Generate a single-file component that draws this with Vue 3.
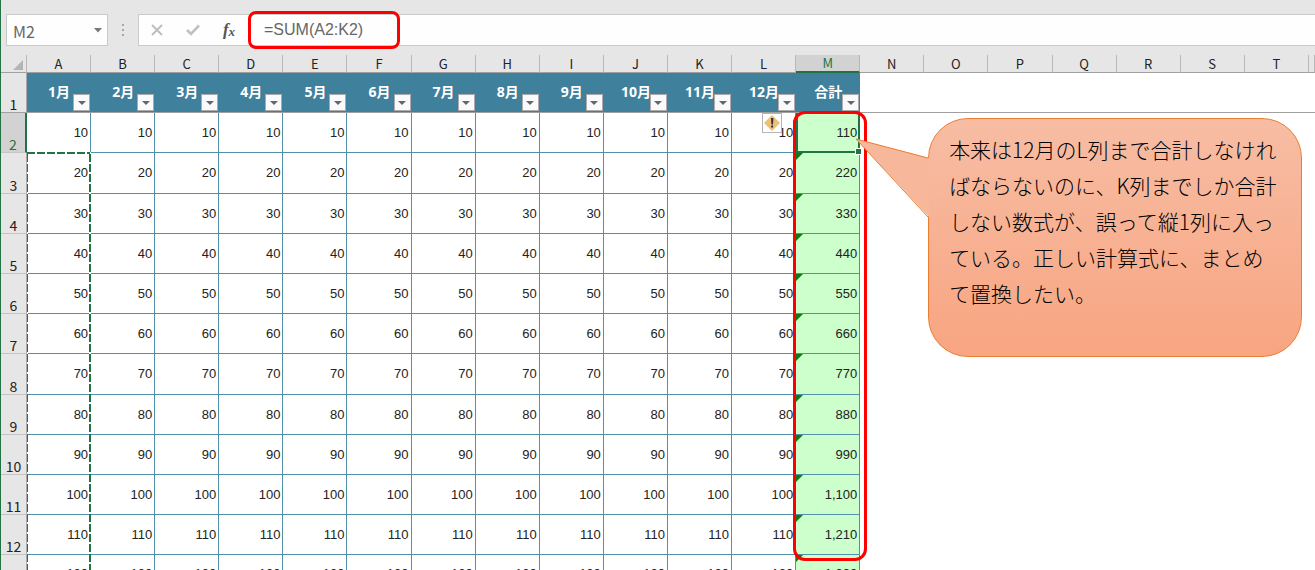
<script setup>
const letters = 'ABCDEFGHIJKLMNOPQRST'.split('')
const headers = [...Array.from({ length: 12 }, (_, i) => `${i + 1}月`), '合計']
const rows = Array.from({ length: 12 }, (_, i) => {
  const value = (i + 1) * 10
  return { number: i + 2, value, total: (value * 11).toLocaleString('en-US') }
})
const callout =
  '本来は12月のL列まで合計しなければならないのに、K列までしか合計しない数式が、誤って縦1列に入っている。正しい計算式に、まとめて置換したい。'
</script>

<template>
  <main class="app">
    <header class="bar">
      <div class="name-box">
        <input class="name-input" type="text" value="M2" aria-label="名前ボックス" />
        <button class="name-drop" type="button" aria-label="名前の一覧">
          <svg width="8" height="5" viewBox="0 0 8 5"><path d="M0 0h8L4 4.5z" fill="#777" /></svg>
        </button>
      </div>
      <svg class="grip" width="3" height="12" viewBox="0 0 3 12">
        <path d="M0 0h2v2H0zM0 5h2v2H0zM0 10h2v2H0z" fill="#a8a8a8" />
      </svg>
      <div class="formula-box">
        <button class="tool" type="button" aria-label="キャンセル">
          <svg width="12" height="12" viewBox="0 0 12 12"><path d="M1 1l10 10M11 1L1 11" fill="none" stroke="#bcbcbc" stroke-width="1.8" /></svg>
        </button>
        <button class="tool" type="button" aria-label="入力">
          <svg width="14" height="12" viewBox="0 0 14 12"><path d="M1 6L5 10L13 1.5" fill="none" stroke="#c0c0c0" stroke-width="2.6" /></svg>
        </button>
        <button class="tool fx" type="button" aria-label="関数の挿入"><i>f</i><i class="x">x</i></button>
        <input class="formula" type="text" value="=SUM(A2:K2)" aria-label="数式バー" />
      </div>
    </header>

    <table class="sheet">
      <colgroup>
        <col class="col-number" />
        <col v-for="l in letters" :key="l" />
        <col class="col-rest" />
      </colgroup>
      <thead>
        <tr class="letters">
          <th class="corner"><svg width="10" height="10" viewBox="0 0 10 10"><path d="M10 0v10H0z" fill="#b4b4b4" /></svg></th>
          <th v-for="l in letters" :key="l" scope="col" :class="{ active: l === 'M' }">{{ l }}</th>
          <th></th>
        </tr>
      </thead>
      <tbody>
        <tr class="titles">
          <th class="number" scope="row">1</th>
          <td v-for="h in headers" :key="h" class="title">
            {{ h }}
            <button class="filter" type="button" :aria-label="h + 'のフィルター'">
              <svg width="8" height="4" viewBox="0 0 8 4"><path d="M0 0h8L4 4z" fill="#666" /></svg>
            </button>
          </td>
          <td v-for="n in 8" :key="n"></td>
        </tr>
        <tr v-for="(row, r) in rows" :key="row.number" class="data">
          <th class="number" scope="row" :class="{ active: r === 0 }">{{ row.number }}</th>
          <td v-for="c in 12" :key="c" class="value">
            {{ row.value }}
            <svg v-if="r === 1 && c === 1" class="ants">
              <path class="base" d="M0 430V1H63V430" />
              <path d="M0 430V1M0 1H63M63 2V430" />
            </svg>
            <button v-if="r === 0 && c === 12" class="warning" type="button" aria-label="エラー チェック オプション">
              <svg width="16" height="16" viewBox="0 0 16 16">
                <path d="M8 0l8 8-8 8-8-8z" fill="#ecc078" />
                <path d="M7 3h2.4L9 9.4H7.4zM7.1 10.6h2v2h-2z" fill="#333" />
              </svg>
            </button>
          </td>
          <td class="value total" :class="{ selected: r === 0 }">
            {{ row.total }}
            <template v-if="r === 0">
              <span class="handle"></span>
              <span class="total-mark"></span>
              <aside class="callout">
                <p>{{ callout }}</p>
                <svg class="tail" width="75" height="82" viewBox="0 0 75 82">
                  <path d="M74 20L1 1L74 79z" fill="#f6b79b" />
                  <path d="M73 20L1 1L73 79" fill="none" stroke="#ed7d31" />
                </svg>
              </aside>
            </template>
            <svg v-else class="flag" width="7" height="7" viewBox="0 0 7 7"><path d="M0 0h7L0 7z" fill="#107c10" /></svg>
          </td>
          <td v-for="n in 8" :key="n"></td>
        </tr>
      </tbody>
    </table>
  </main>
</template>

<style>
body {
  margin: 0;
}
</style>

<style scoped>
.app {
  height: 100vh;
  overflow: hidden;
  box-sizing: border-box;
  border-left: 1px solid #217346;
  background: #fff;
  color: #222;
  font-family: "Liberation Sans", "Noto Sans CJK JP", sans-serif;
}
button {
  padding: 0;
  border: 0;
  background: none;
}
input {
  min-width: 0;
  padding: 0;
  border: 0;
  outline: 0;
  background: none;
  color: #666;
  font-size: 16px;
}
.bar {
  display: flex;
  align-items: center;
  height: 55px;
  padding: 14px 0 9px 5px;
  box-sizing: border-box;
  background: #e6e6e6;
}
.name-box,
.formula-box {
  display: flex;
  align-items: center;
  height: 32px;
  box-sizing: border-box;
  border: 1px solid #cacaca;
  background: #fefefe;
}
.name-box {
  width: 102px;
  padding: 0 5px 0 6px;
}
.name-input {
  flex: 1;
  padding-top: 2px;
  font-family: "Noto Sans CJK JP", sans-serif;
}
.name-drop,
.tool {
  display: flex;
  align-items: center;
  justify-content: center;
}
.grip {
  margin: 0 13px 0 14px;
}
.formula-box {
  flex: 1;
  border-right: 0;
}
.tool {
  width: 36px;
  height: 30px;
  color: #555;
}
.fx {
  font: bold 17px "Liberation Serif", serif;
}
.fx .x {
  align-self: flex-end;
  padding-bottom: 5px;
  font-size: 13px;
}
.formula {
  width: 152px;
  height: 38px;
  box-sizing: border-box;
  margin-left: 1px;
  padding-left: 13px;
  border: 3px solid #fe0000;
  border-radius: 8px;
  font-family: "Liberation Sans", sans-serif;
}
.sheet {
  width: 100%;
  table-layout: fixed;
  border-collapse: separate;
  border-spacing: 0;
}
.col-number {
  width: 26px;
}
.col-rest {
  width: 6px;
}
th,
td {
  position: relative;
  box-sizing: border-box;
  padding: 0;
}
.letters th {
  height: 18px;
  border-right: 1px solid #b8b8b8;
  border-bottom: 1px solid #a0a0a0;
  background: #e6e6e6;
  font: 13px/17px "Noto Sans CJK JP", sans-serif;
}
.letters .active {
  border-bottom: 2px solid #217346;
  background: #d2d2d2;
  color: #217346;
  line-height: 16px;
}
.corner svg {
  display: block;
  margin: 2px 3px 0 auto;
}
.number {
  border-right: 1px solid #ababab;
  border-bottom: 1px solid #c4c4c4;
  background: #e6e6e6;
  color: #222;
  font: 14px/16px "Noto Sans CJK JP", sans-serif;
  vertical-align: bottom;
}
.number.active {
  border-right: 2px solid #217346;
  background: #d2d2d2;
  color: #217346;
}
.titles > * {
  height: 40px;
  border-bottom: 1px solid #a0a0a0;
}
.title {
  background: #3f819d;
  color: #fff;
  font: bold 14px/20px "Noto Sans", "Noto Sans CJK JP", sans-serif;
  text-align: center;
}
.titles .title {
  padding-bottom: 2px;
}
.filter {
  position: absolute;
  right: 1px;
  bottom: 1px;
  display: flex;
  align-items: center;
  justify-content: center;
  width: 17px;
  height: 17px;
  border: 1px solid #ababab;
  background: #fafafc;
}
.data {
  height: 40px;
}
.data:nth-child(5n + 3) {
  height: 41px;
}
.data:last-child {
  height: 38px;
}
.value {
  padding: 0 2px 1px 0;
  border-right: 1px solid #5191aa;
  border-bottom: 1px solid #5191aa;
  font-size: 13px;
  text-align: right;
}
.total {
  background: #ccffcc;
}
.selected {
  z-index: 2;
  padding: 0 1px 0 0;
  border: 2px solid #217346;
  border-top: 0;
}
.flag {
  position: absolute;
  top: 0;
  left: 0;
}
.ants {
  position: absolute;
  top: -1px;
  left: 0;
  z-index: 1;
  width: 66px;
  height: 430px;
  pointer-events: none;
}
.ants path {
  fill: none;
  stroke: #217346;
  stroke-width: 2;
  stroke-dasharray: 8 2;
}
.ants .base {
  stroke: #fff;
  stroke-dasharray: none;
}
.warning {
  position: absolute;
  top: 0;
  right: 13px;
  display: flex;
  align-items: center;
  justify-content: center;
  width: 20px;
  height: 20px;
  border: 1px solid #b4b4b4;
  background: #fff;
}
.handle {
  position: absolute;
  right: -4px;
  bottom: -4px;
  width: 5px;
  height: 5px;
  border: 1px solid #fff;
  background: #217346;
}
.total-mark {
  position: absolute;
  top: -2px;
  left: -5px;
  width: 68px;
  height: 444px;
  border: 3px solid #fe0000;
  border-radius: 12px;
}
.callout {
  position: absolute;
  top: 5px;
  left: 130px;
  width: 374px;
  height: 239px;
  box-sizing: border-box;
  padding: 12px 18px 0 20px;
  border: 1px solid #ed7d31;
  border-radius: 40px;
  background: linear-gradient(#f7bda4, #f8a581);
  color: #000;
  text-align: left;
}
.callout p {
  margin: 0;
  font: 300 21px/36px "Noto Sans CJK JP", sans-serif;
}
.tail {
  position: absolute;
  top: 19px;
  left: -74px;
}
</style>
